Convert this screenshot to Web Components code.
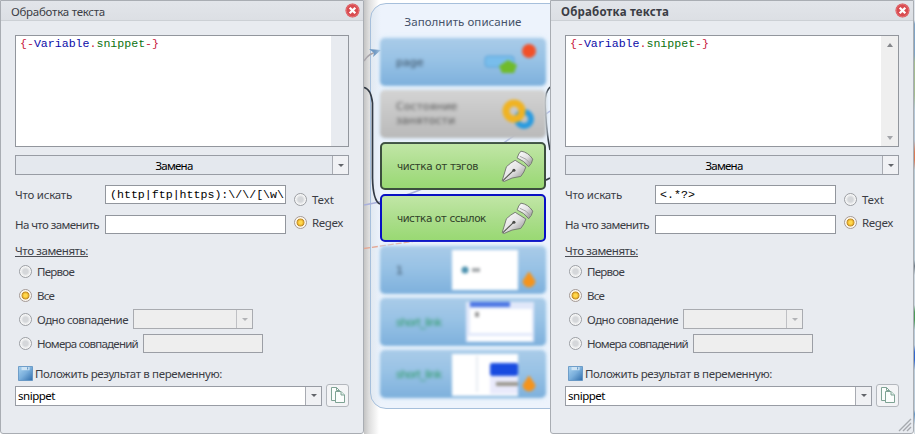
<!DOCTYPE html>
<html lang="ru">
<head>
<meta charset="utf-8">
<title>Обработка текста</title>
<style>
body{
    margin: 0;
    width: 915px;
    height: 434px;
    overflow: hidden;
    display: flex;
    background: #fff;
    font-family: "Noto Sans", "DejaVu Sans Condensed", sans-serif;
    font-size: 11.5px;
    color: #3b3d45;
}
.edge{
    flex: 1;
    background: linear-gradient(#dfe5ec 0 20px, #7fa3c4 24px 55px, #a3bc92 62px 95px, #b3c6d6 110px 140px, #d97b57 152px 160px, #b8c9d4 170px 260px, #707c86 266px, #cdd8e0 275px 305px, #4c9b59 312px 320px, #b9cad8 330px 345px, #3268ce 352px 360px, #b9cad8 370px 410px, #6394c4 414px, #d5dde3 425px);
}
</style>
</head>
<body>
<text-dialog caption="Обработка текста" search="(http|ftp|https):\/\/[\w\"></text-dialog>
<flow-canvas></flow-canvas>
<text-dialog caption="Обработка текста" search="&lt;.*?&gt;" active></text-dialog>
<div class="edge"></div>

<script>
// text run stretched to a given width with letter spacing
class FitText extends HTMLElement{
    constructor(){
        super();
        this.attachShadow({mode:'open'});
        this.shadowRoot.innerHTML=`
        <style>
        :host{ display: inline-block; white-space: nowrap; line-height: 15px; }
        span{ display: inline-block; }
        </style>
        <span><slot></slot></span>`;
    }
    connectedCallback(){
        const w=parseFloat(this.getAttribute('w'));
        const span=this.shadowRoot.querySelector('span');
        const count=this.textContent.length;
        if(!w||!count) return;
        span.style.letterSpacing='0px';
        const natural=span.getBoundingClientRect().width;
        span.style.letterSpacing=((w-natural)/count)+'px';
    }
}
customElements.define('fit-text',FitText);

class RadioDot extends HTMLElement{
    constructor(){
        super();
        this.attachShadow({mode:'open'});
        this.shadowRoot.innerHTML=`
        <style>
        :host{ display: flex; align-items: center; height: 13px; }
        i{
            box-sizing: border-box;
            flex: none;
            width: 13px;
            height: 13px;
            border: 1px solid #9b9ea3;
            border-radius: 50%;
            background: radial-gradient(circle, #d5d7da 0 2.5px, #e4e6e8 3.5px, #f7f7f7 5px);
        }
        :host([checked]) i{
            border-color: #a59a96;
            background: radial-gradient(circle, #ffd84d 0 1.5px, #f0b62c 2.6px, #b98b31 3.6px, #fff3dc 4.3px, #fbf8f2 5px);
        }
        slot{ display: block; margin-left: 5px; }
        </style>
        <i></i><slot></slot>`;
    }
}
customElements.define('radio-dot',RadioDot);

class ComboBox extends HTMLElement{
    constructor(){
        super();
        this.attachShadow({mode:'open'});
        this.shadowRoot.innerHTML=`
        <style>
        :host{
            box-sizing: border-box;
            display: flex;
            height: 20px;
            border: 1px solid #989ca4;
            background: #fff;
            color: #000;
        }
        .value{ flex: 1; display: flex; align-items: center; padding-left: 2px; }
        .arrow{
            width: 15px;
            border-left: 1px solid #a8abb2;
            background: #f0f1f4;
            display: flex;
            align-items: center;
            justify-content: center;
        }
        .arrow::before{
            content: '';
            border: 3px solid transparent;
            border-top: 3.5px solid #62656a;
            border-bottom: 0;
        }
        :host([button]){ background: #e4e8ee; }
        :host([button]) .value{ justify-content: center; padding-left: 0; }
        :host([disabled]){ background: #eee; border-color: #a9abb0; }
        :host([disabled]) .arrow{ background: #eee; border-color: #bfc0c4; }
        :host([disabled]) .arrow::before{ border-top-color: #b2b3b6; }
        </style>
        <div class="value"><slot></slot></div>
        <div class="arrow"></div>`;
    }
}
customElements.define('combo-box',ComboBox);

class TextDialog extends HTMLElement{
    constructor(){
        super();
        this.attachShadow({mode:'open'});
    }
    connectedCallback(){
        const active=this.hasAttribute('active');
        const esc=s=>s.replace(/&/g,'&amp;').replace(/</g,'&lt;');
        this.shadowRoot.innerHTML=`
        <style>
        :host{
            box-sizing: border-box;
            flex: none;
            width: 364px;
            height: 434px;
            border: 1px solid #a9adb3;
            border-radius: 0 0 3px 3px;
            background: #e8ebf0;
            display: flex;
            flex-direction: column;
            position: relative;
            z-index: 1;
        }
        header{
            box-sizing: border-box;
            height: 20px;
            border-bottom: 1px solid #ccd0d5;
            background: linear-gradient(#e2e5ea, #dcdfe4);
            display: flex;
            align-items: center;
            justify-content: space-between;
            padding: 0 3px 0 10px;
        }
        header fit-text{ padding-top: 1px; }
        :host([active]) header fit-text{ font-weight: bold; }
        main{ padding: 14px 14px 0; display: flex; flex-direction: column; }
        .editor{
            box-sizing: border-box;
            height: 112px;
            border: 1px solid #92969d;
            background: #fff;
            display: flex;
            justify-content: space-between;
        }
        .mono{ font-family: "Liberation Mono", monospace; font-size: 11.6px; }
        .code{ padding: 0 0 0 4px; color: #c8203c; }
        .code b{ font-weight: normal; color: #0a0aa8; }
        .code em{ font-style: normal; color: #0c720f; }
        .scroll{
            box-sizing: border-box;
            width: 17px;
            background: #e8ebf0;
            display: flex;
            flex-direction: column;
            justify-content: space-between;
            align-items: center;
            padding: 7px 0 6px;
        }
        :host([active]) .scroll{ background: #efefef; }
        .up,.down{ border: 3.5px solid transparent; }
        .up{ border-bottom: 4px solid #85878b; border-top: 0; }
        .down{ border-top: 4px solid #a3a5a9; border-bottom: 0; }
        .mode{ margin-top: 8px; }
        .find{ display: flex; margin-top: 10px; }
        .fields{ display: grid; grid-template-columns: 90px 181px; grid-auto-rows: 19px; row-gap: 11px; align-items: center; }
        .input{
            box-sizing: border-box;
            height: 19px;
            border: 1px solid #92969d;
            background: #fff;
            color: #000;
            padding-left: 4px;
            overflow: hidden;
            white-space: nowrap;
        }
        .input fit-text{ line-height: 17px; }
        .kind{ display: flex; flex-direction: column; gap: 10px; padding: 8px 0 0 8px; }
        .what{ height: 16px; margin-top: 9px; }
        .what fit-text{ height: 13px; line-height: 15px; border-bottom: 1px solid #4c4e55; }
        .option{ height: 24px; display: flex; align-items: center; padding-left: 4px; }
        .off{ box-sizing: border-box; width: 120px; height: 19px; border: 1px solid #9b9ea5; background: #eee; margin-left: 5px; }
        .save{ height: 16px; margin-top: 10px; padding-left: 3px; display: flex; align-items: center; }
        .save fit-text{ margin-left: 2px; }
        .result{ display: flex; align-items: center; justify-content: space-between; height: 23px; margin-top: 3px; }
        .copy{
            box-sizing: border-box;
            width: 23px;
            height: 23px;
            border: 1px solid #b3b7bd;
            border-radius: 3px;
            background: #f3f4f6;
        }
        svg{ display: block; flex: none; }
        .grip{ position: absolute; right: 1px; bottom: 1px; }
        </style>
        <header>
            <fit-text w="${active?108:94}">${esc(this.getAttribute('caption'))}</fit-text>
            <svg width="15" height="15" viewBox="0 0 15 15">
                <circle cx="7.5" cy="7.5" r="7" fill="#d84b50"/>
                <circle cx="7.5" cy="7.5" r="6.2" fill="none" stroke="#e98083" stroke-width=".7"/>
                <path d="M4.7 4.7l5.6 5.6M10.3 4.7l-5.6 5.6" stroke="#fff" stroke-width="2.3"/>
            </svg>
        </header>
        <main>
            <div class="editor">
                <div class="code mono"><fit-text w="139">{-<b>Variable</b>.<em>snippet</em>-}</fit-text></div>
                <div class="scroll">${active?'<div class="up"></div><div class="down"></div>':''}</div>
            </div>
            <combo-box class="mode" button><fit-text w="37">Замена</fit-text></combo-box>
            <div class="find">
                <div class="fields">
                    <fit-text w="57">Что искать</fit-text>
                    <div class="input mono"><fit-text w="${active?35:174}">${esc(this.getAttribute('search'))}</fit-text></div>
                    <fit-text w="84">На что заменить</fit-text>
                    <div class="input"></div>
                </div>
                <div class="kind">
                    <radio-dot><fit-text w="22">Text</fit-text></radio-dot>
                    <radio-dot checked><fit-text w="31">Regex</fit-text></radio-dot>
                </div>
            </div>
            <div class="what"><fit-text w="73">Что заменять:</fit-text></div>
            <div class="option"><radio-dot><fit-text w="37">Первое</fit-text></radio-dot></div>
            <div class="option"><radio-dot checked><fit-text w="17">Все</fit-text></radio-dot></div>
            <div class="option">
                <radio-dot><fit-text w="91">Одно совпадение</fit-text></radio-dot>
                <combo-box disabled style="width:120px;margin-left:5px"></combo-box>
            </div>
            <div class="option">
                <radio-dot><fit-text w="101">Номера совпадений</fit-text></radio-dot>
                <div class="off"></div>
            </div>
            <div class="save">
                <svg width="15" height="15" viewBox="0 0 15 15">
                    <defs><linearGradient id="d" x2="1" y2="1"><stop stop-color="#a9d3f0"/><stop offset=".5" stop-color="#79aedb"/><stop offset="1" stop-color="#2f6cab"/></linearGradient></defs>
                    <path d="M.5.5h14v14H.5z" fill="url(#d)" stroke="#5b8fc0" stroke-width=".8"/>
                    <path d="M3.500 1h8v3.200h-8z" fill="#cfe4f4"/>
                    <path d="M9 1.200h1.200v2.200H9z" fill="#6a9ccb"/>
                </svg>
                <fit-text w="187">Положить результат в переменную:</fit-text>
            </div>
            <div class="result">
                <combo-box style="width:307px"><fit-text w="37">snippet</fit-text></combo-box>
                <div class="copy">
                    <svg width="21" height="21" viewBox="0 0 21 21" fill="#fbfdfc" stroke="#7fa395" stroke-width="1">
                        <path d="M4.500 2.500h5l3 3v10h-8z"/><path d="M9.500 2.500v3h3" fill="none"/>
                        <path d="M8.500 6.500h5.500l3.500 3.500v7.500h-9z"/><path d="M14 6.500V10h3.500" fill="#dcebe4"/>
                    </svg>
                </div>
            </div>
        </main>
        ${active?`<svg class="grip" width="14" height="14" viewBox="0 0 14 14" stroke="#a6a9ae" stroke-width="1.4"><path d="M1 13L13 1M5 13l8-8M9 13l4-4"/></svg>`:''}`;
    }
}
customElements.define('text-dialog',TextDialog);

const pen=`<defs>
        <linearGradient id="p" x1="0" y1="0" x2="1" y2="1"><stop stop-color="#fff"/><stop offset=".5" stop-color="#e4e3e5"/><stop offset="1" stop-color="#858383"/></linearGradient>
    </defs>
    <path d="M1.200 32.600L5.600 18.200Q10 14 14.600 11.600L25.600 18.500Q24 24 20.400 28.200Q11 29 3.200 33.400z" fill="url(#p)" stroke="#757b71" stroke-width="1"/>
    <path d="M2 32.500L12.400 22.600" stroke="#50534b" stroke-width="1.100"/>
    <circle cx="13.300" cy="21.800" r="1.600" fill="#4a4b48"/>
    <path d="M16.600 9.200Q18 4.500 20.500 2.200Q28 3.200 32.700 10.400Q32 15 28.500 18.200Q24 12 16.600 9.200z" fill="url(#p)" stroke="#757b71" stroke-width="1"/>
    <path d="M19.400 7.500Q26.500 9.500 30.500 15.300" fill="none" stroke="#a4a4a3"/>`;

class FlowNode extends HTMLElement{
    constructor(){
        super();
        this.attachShadow({mode:'open'});
        this.shadowRoot.innerHTML=`
        <style>
        :host{
            box-sizing: border-box;
            height: 48px;
            border-radius: 5px;
            display: flex;
            align-items: center;
            justify-content: space-between;
            padding: 0 10px 0 16px;
            background: linear-gradient(#a9cbe8, #98c2e5 45%, #7db0dc);
            box-shadow: 0 0 4px 1px #d9ecfa;
            filter: blur(1.6px);
            font-family: "DejaVu Sans", sans-serif;
            font-size: 11px;
            color: #33475a;
        }
        :host([kind=gray]){ background: linear-gradient(#d3d3d3, #b9b9b9); color: #555; }
        :host([kind=link]){ color: #2b9a63; }
        :host([kind=green]),:host([kind=picked]){
            filter: none;
            border: 2px solid #3c4f3e;
            background: linear-gradient(#c1e6a6, #aadd8a 55%, #99d973);
            box-shadow: none;
            color: #304129;
            padding: 0 10px 0 15px;
            font-size: 10.5px;
        }
        :host([kind=picked]){ border-color: #0810c4; }
        ::slotted(span){ filter: blur(.8px); }
        ::slotted(svg){ display: block; flex: none; }
        </style>
        <slot></slot><slot name="icon"></slot>`;
    }
}
customElements.define('flow-node',FlowNode);

class FlowCanvas extends HTMLElement{
    constructor(){
        super();
        this.attachShadow({mode:'open'});
        this.shadowRoot.innerHTML=`
        <style>
        :host{
            display: block;
            flex: none;
            width: 186px;
            height: 434px;
            overflow: hidden;
            position: relative;
            background: linear-gradient(90deg, #c4c4c4, #dedede 5px, #fff 15px);
        }
        .group{
            box-sizing: border-box;
            width: 196px;
            height: 406px;
            margin: 3px 0 0 6px;
            border: 1px solid #a6bfdb;
            border-radius: 16px;
            background: linear-gradient(90deg, #e1e9f1, #edf3fc 10px);
            padding: 0 19px 0 9px;
            display: flex;
            flex-direction: column;
        }
        .title{ height: 34px; display: flex; align-items: center; justify-content: center; color: #455269; }
        .nodes{ display: flex; flex-direction: column; gap: 4px; position: relative; z-index: 1; }
        .wires{ position: absolute; left: 0; top: 0; }
        .two{ line-height: 14px; }
        </style>
        <svg class="wires" width="186" height="434" fill="none" style="z-index:1">
            <path d="M0 205Q38 198 58 189Q115 160 138 144L186 111" stroke="#a9b0dc" stroke-width="1.500"/>
            <path d="M0 248.500L52 241" stroke="#e5a692" stroke-width="1.300" stroke-dasharray="6 2"/>
            <path d="M0 87.500Q7 89 8.500 103V178Q9 201 16 204" stroke="#333b45" stroke-width="1.700"/>
            <path d="M186 87Q181 92 181 103Q182 130 186 150M180 180.500Q183 180 186 178" stroke="#333b45" stroke-width="1.600"/>
            <path d="M0 61Q5 53 13 52" stroke="#a8a4aa" stroke-width="1.500"/>
            <path d="M5 49l12 1-8 7 1-4z" fill="#6f98c2"/>
        </svg>
        <div class="group">
            <div class="title"><fit-text w="117">Заполнить описание</fit-text></div>
            <div class="nodes">
                <flow-node><span>page</span>
                    <svg slot="icon" width="56" height="44" viewBox="0 0 56 44"><rect x="5" y="16" width="29" height="11" rx="3" fill="#78bdec" stroke="#5ca3d7"/><path d="M19 26l9-6 9 5-3 8H22z" fill="#70bb2b"/><circle cx="49" cy="11" r="7" fill="#f25028"/></svg>
                </flow-node>
                <flow-node kind="gray"><span class="two">Состояние<br>занятости</span>
                    <svg slot="icon" width="36" height="36" viewBox="0 0 36 36" fill="none" stroke-width="6"><circle cx="24" cy="23" r="7" stroke="#299be0"/><circle cx="14" cy="15" r="8" stroke="#f0b322" stroke-width="7"/></svg>
                </flow-node>
                <flow-node kind="green"><fit-text w="81">чистка от тэгов</fit-text><svg slot="icon" width="33" height="35" viewBox="0 0 34 36">${pen}</svg></flow-node>
                <flow-node kind="picked"><fit-text w="89">чистка от ссылок</fit-text><svg slot="icon" width="33" height="35" viewBox="0 0 34 36">${pen}</svg></flow-node>
                <flow-node><span>1</span>
                    <svg slot="icon" width="84" height="44" viewBox="0 0 84 44"><path d="M0 2h66v40H0z" fill="#fff"/><circle cx="13" cy="22" r="3.500" fill="#4c91ae"/><path d="M20 22h8" stroke="#a5a9ac" stroke-width="4"/><path d="M77 24l6 9a6 6 0 0 1-12 0z" fill="#f5941c" stroke="#f5941c"/></svg>
                </flow-node>
                <flow-node kind="link"><span style="letter-spacing:-.8px">short_link</span>
                    <svg slot="icon" width="70" height="44" viewBox="0 0 70 44"><path d="M0 2h68v40H0z" fill="#e1e8fa"/><path d="M4 2h40v5H4z" fill="#4c76e4"/><path d="M4 9h62v24H4zM2 36h64v5H2z" fill="#fff"/><path d="M11 12v5" stroke="#999" stroke-width="4"/></svg>
                </flow-node>
                <flow-node kind="link"><span style="letter-spacing:-.8px">short_link</span>
                    <svg slot="icon" width="84" height="44" viewBox="0 0 84 44"><path d="M0 2h66v42H0z" fill="#fff"/><path d="M25 4v36" stroke="#e8edf2" stroke-width="2"/><path d="M38 25h28v17H38z" fill="#e9eafb"/><rect x="38" y="11" width="28" height="13" rx="2" fill="#194be0"/><path d="M44 32h22" stroke="#9a978e" stroke-width="4"/><path d="M77 24l6 9a6 6 0 0 1-12 0z" fill="#f5941c" stroke="#f5941c"/></svg>
                </flow-node>
            </div>
        </div>`;
    }
}
customElements.define('flow-canvas',FlowCanvas);
</script>
</body>
</html>
